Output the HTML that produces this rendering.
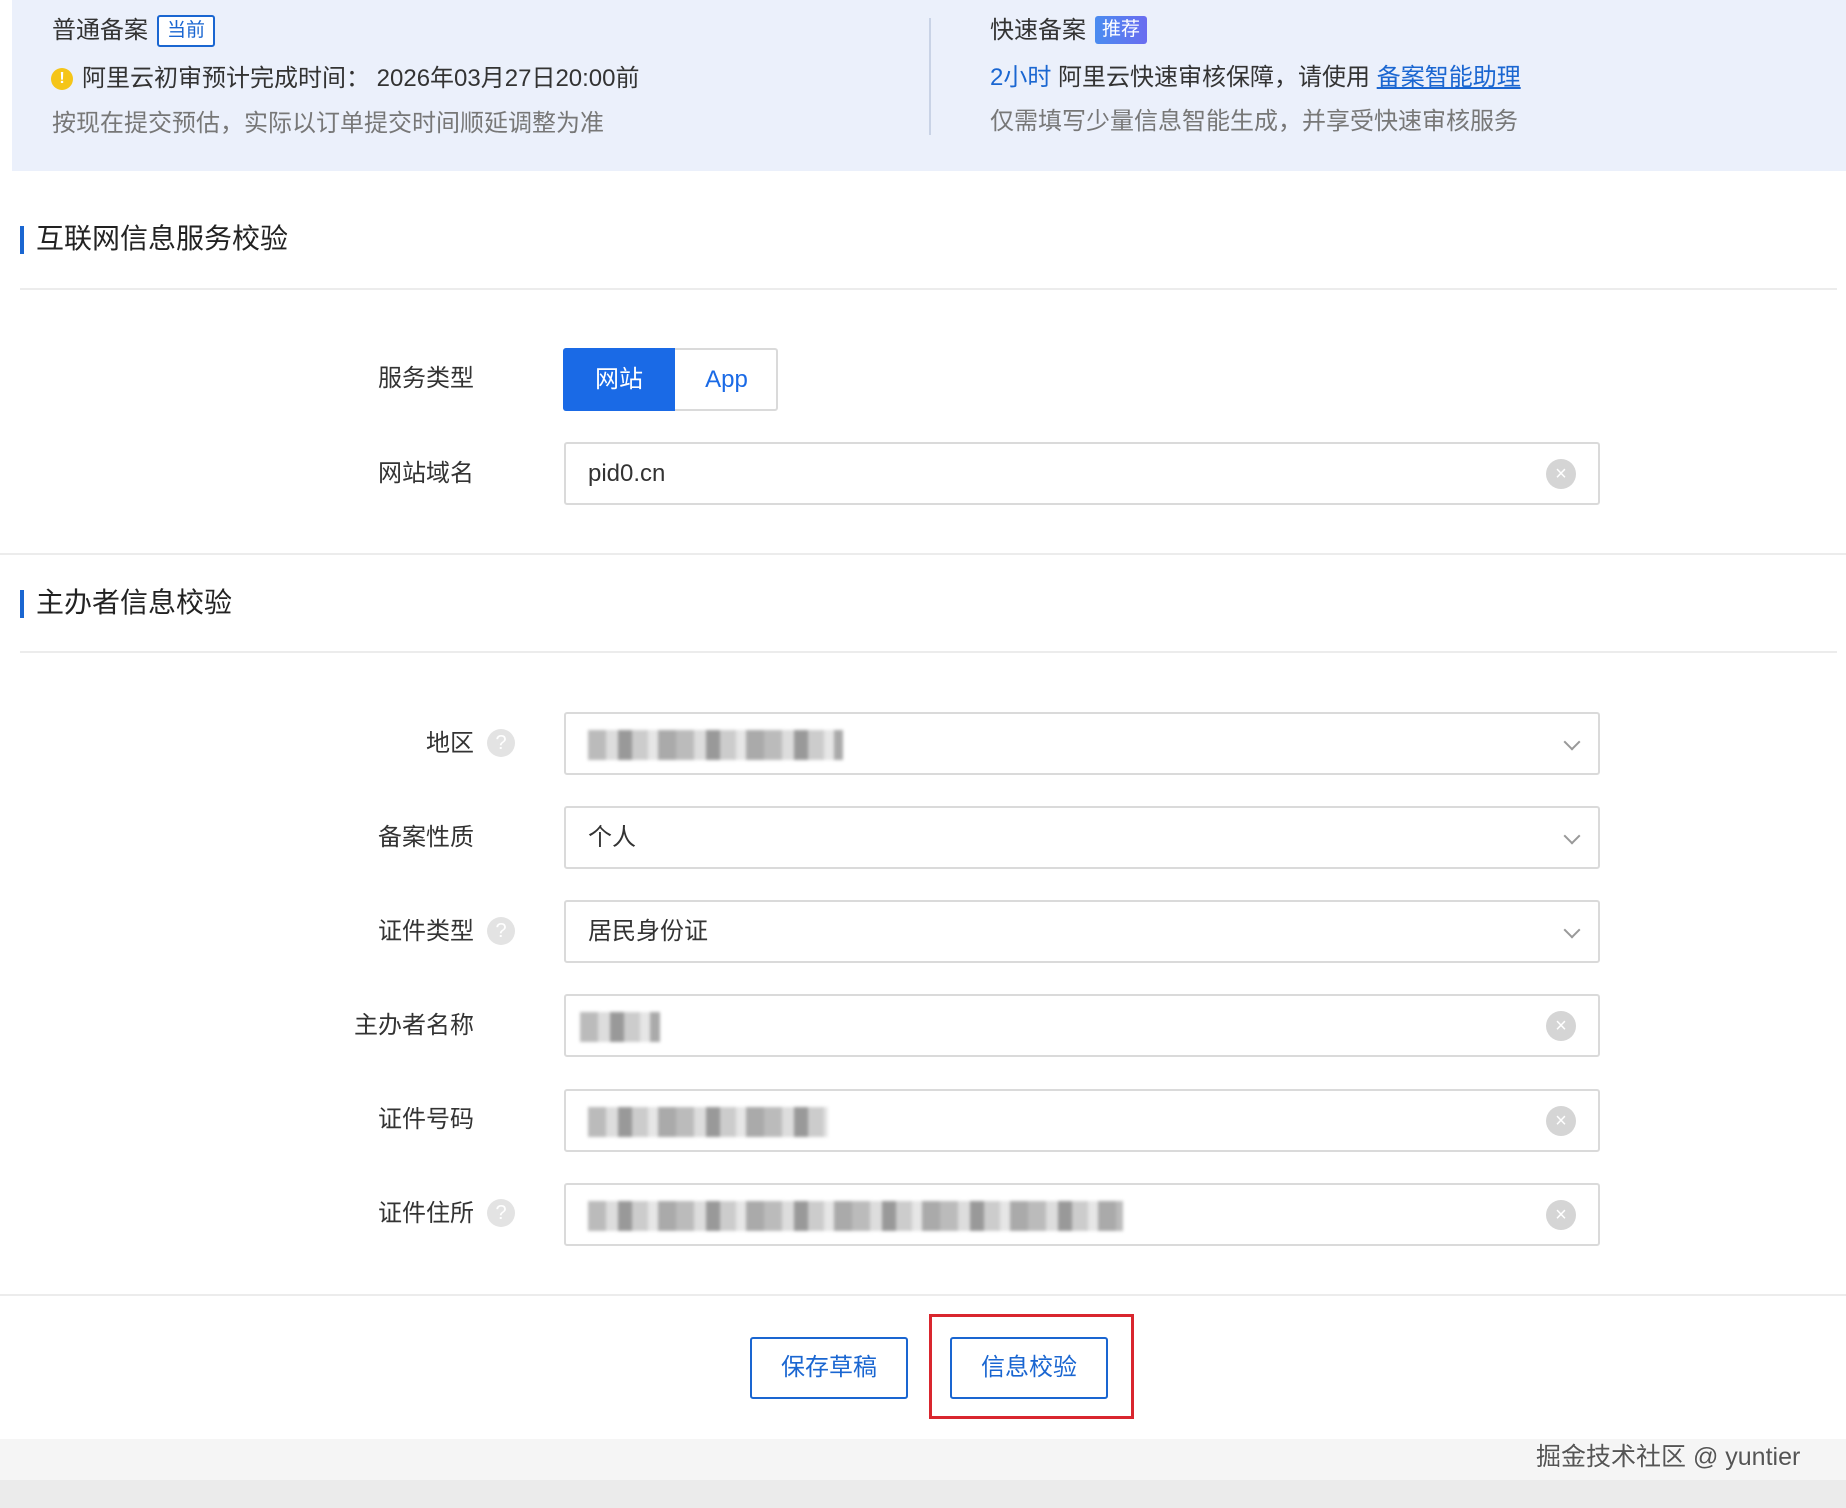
<!DOCTYPE html>
<html><head><meta charset="utf-8"><style>
*{margin:0;padding:0;box-sizing:border-box}
body{width:1846px;height:1508px;position:relative;background:#fff;font-family:"Liberation Sans","Noto Sans CJK SC",sans-serif;color:#333;overflow:hidden}
.a{position:absolute;white-space:nowrap}
.banner{left:12px;top:0;width:1834px;height:171px;background:#ebf0fb}
.t{font-size:24px;line-height:30px}
.tag{border:2px solid #1a66d1;color:#1a66d1;font-size:19px;line-height:28px;padding:0 8px;border-radius:3px;background:#fff}
.tag2{background:linear-gradient(90deg,#4a8cf0,#6a6cf0);color:#fff;font-size:19px;line-height:28px;padding:0 7px;border-radius:3px}
.gray{color:#777}
.blue{color:#1a66d1}
.sec{font-size:28px;line-height:34px;color:#222}
.bar{width:4px;height:28px;background:#1a66d1}
.hr{height:2px;background:#ececec}
.lbl{font-size:24px;line-height:30px;color:#333;text-align:right;width:300px}
.inp{left:564px;width:1036px;height:63px;border:2px solid #dadada;border-radius:3px;background:#fff}
.val{font-size:24px;line-height:30px;color:#333;left:22px;top:15px}
.clr{right:22px;top:15px;width:30px;height:30px;border-radius:50%;background:#d5d5d5;color:#fff;font-size:20px;line-height:30px;text-align:center}
.q{width:28px;height:28px;border-radius:50%;background:#e3e3e3;color:#fff;font-size:20px;line-height:28px;text-align:center;left:487px}
.chev{right:20px;top:22px;width:12px;height:12px;border-right:2px solid #999;border-bottom:2px solid #999;transform:rotate(45deg)}
.blur{height:30px;filter:blur(1.5px);background:repeating-linear-gradient(90deg,#bbb 0 18px,#ddd 18px 30px,#999 30px 44px,#ccc 44px 60px,#e6e6e6 60px 70px,#aaa 70px 88px)}
.btn{top:1337px;width:158px;height:62px;border:2px solid #1a66d1;border-radius:3px;color:#1a66d1;font-size:24px;line-height:58px;text-align:center}
</style></head><body>
<div class="a banner"></div>
<div class="a t" style="left:52px;top:16px">普通备案</div>
<div class="a tag" style="left:157px;top:15px">当前</div>
<div class="a" style="left:51px;top:68px;width:22px;height:22px;border-radius:50%;background:#f5c518;color:#fff;font-size:16px;line-height:22px;text-align:center;font-weight:bold">!</div>
<div class="a t" style="left:82px;top:64px">阿里云初审预计完成时间：&nbsp;2026年03月27日20:00前</div>
<div class="a t gray" style="left:52px;top:109px">按现在提交预估，实际以订单提交时间顺延调整为准</div>
<div class="a" style="left:929px;top:18px;width:2px;height:117px;background:#c9d3e6"></div>
<div class="a t" style="left:990px;top:16px">快速备案</div>
<div class="a tag2" style="left:1095px;top:16px">推荐</div>
<div class="a t" style="left:990px;top:63px"><span class="blue">2小时</span> 阿里云快速审核保障，请使用 <span class="blue" style="text-decoration:underline">备案智能助理</span></div>
<div class="a t gray" style="left:990px;top:107px">仅需填写少量信息智能生成，并享受快速审核服务</div>

<div class="a bar" style="left:20px;top:226px"></div>
<div class="a sec" style="left:36px;top:222px">互联网信息服务校验</div>
<div class="a hr" style="left:20px;top:288px;width:1817px"></div>

<div class="a lbl" style="left:174px;top:364px">服务类型</div>
<div class="a" style="left:563px;top:348px;width:215px;height:63px;border:2px solid #dadada;border-radius:3px;background:#fff"></div>
<div class="a" style="left:563px;top:348px;width:112px;height:63px;background:#1a6ae6;border-radius:3px 0 0 3px;color:#fff;font-size:24px;line-height:63px;text-align:center">网站</div>
<div class="a blue" style="left:675px;top:348px;width:103px;height:63px;font-size:24px;line-height:63px;text-align:center;color:#1a6ae6">App</div>

<div class="a lbl" style="left:174px;top:459px">网站域名</div>
<div class="a inp" style="top:442px"><div class="a val">pid0.cn</div><div class="a clr">×</div></div>

<div class="a hr" style="left:0;top:553px;width:1846px"></div>
<div class="a bar" style="left:20px;top:590px"></div>
<div class="a sec" style="left:36px;top:586px">主办者信息校验</div>
<div class="a hr" style="left:20px;top:651px;width:1817px"></div>

<div class="a lbl" style="left:174px;top:729px">地区</div>
<div class="a q" style="top:729px">?</div>
<div class="a inp" style="top:712px"><div class="a blur" style="left:22px;top:16px;width:255px"></div><div class="a chev"></div></div>

<div class="a lbl" style="left:174px;top:823px">备案性质</div>
<div class="a inp" style="top:806px"><div class="a val">个人</div><div class="a chev"></div></div>

<div class="a lbl" style="left:174px;top:917px">证件类型</div>
<div class="a q" style="top:917px">?</div>
<div class="a inp" style="top:900px"><div class="a val">居民身份证</div><div class="a chev"></div></div>

<div class="a lbl" style="left:174px;top:1011px">主办者名称</div>
<div class="a inp" style="top:994px"><div class="a blur" style="left:14px;top:16px;width:80px"></div><div class="a clr">×</div></div>

<div class="a lbl" style="left:174px;top:1105px">证件号码</div>
<div class="a inp" style="top:1089px"><div class="a blur" style="left:22px;top:16px;width:240px"></div><div class="a clr">×</div></div>

<div class="a lbl" style="left:174px;top:1199px">证件住所</div>
<div class="a q" style="top:1199px">?</div>
<div class="a inp" style="top:1183px"><div class="a blur" style="left:22px;top:16px;width:535px"></div><div class="a clr">×</div></div>

<div class="a hr" style="left:0;top:1294px;width:1846px"></div>
<div class="a btn" style="left:750px">保存草稿</div>
<div class="a btn" style="left:950px">信息校验</div>
<div class="a" style="left:929px;top:1314px;width:205px;height:105px;border:3px solid #d9262e"></div>

<div class="a" style="left:0;top:1439px;width:1846px;height:41px;background:#f5f5f5"></div>
<div class="a" style="left:0;top:1480px;width:1846px;height:28px;background:#ebebeb"></div>
<div class="a" style="left:1536px;top:1441px;font-size:25px;line-height:32px;color:#555;text-shadow:0 0 2px #fff">掘金技术社区 @ yuntier</div>
</body></html>
